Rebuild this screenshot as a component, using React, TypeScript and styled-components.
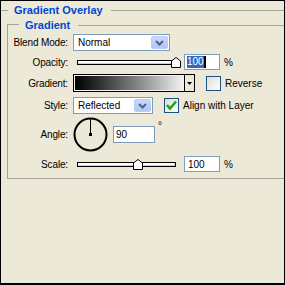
import styled, { createGlobalStyle } from 'styled-components';

const GlobalStyle = createGlobalStyle`
  html, body {
    margin: 0;
    padding: 0;
    background: #ece9d8;
  }
`;

const Panel = styled.div`
  width: 285px;
  height: 285px;
  box-sizing: border-box;
  border: 1px solid #000;
  border-bottom-width: 2px;
  background: #ece9d8;
  font-family: "Liberation Sans", Arial, sans-serif;
  color: #000;
  overflow: hidden;
`;

// 섹션 머리줄 (선 - 제목 - 선)
const HeadRow = styled.div<{ $mt: number }>`
  display: flex;
  align-items: center;
  height: 12px;
  margin-top: ${(p) => p.$mt}px;
`;
const Rule = styled.div<{ $w?: number }>`
  height: 0;
  border-top: 1px solid #a7a496;
  ${(p) => (p.$w ? `width: ${p.$w}px;` : 'flex: 1;')}
`;
const Corner = styled.div`
  width: 11px;
  height: 6px;
  align-self: flex-end;
  border-top: 1px solid #a7a496;
  border-left: 1px solid #a7a496;
`;
const Heading = styled.span<{ $ml: number }>`
  font-weight: bold;
  font-size: 11px;
  color: #0046d5;
  margin: 0 8px 0 ${(p) => p.$ml}px;
  white-space: nowrap;
`;

const Group = styled.div`
  margin-left: 6px;
  margin-top: 3px;
`;
const Body = styled.div`
  border-left: 1px solid #a7a496;
  border-bottom: 1px solid #a7a496;
  padding: 3px 0 6px;
`;

const Row = styled.div<{ $h: number; $mt?: number }>`
  display: grid;
  grid-template-columns: 60px auto;
  column-gap: 5px;
  align-items: center;
  height: ${(p) => p.$h}px;
  margin-top: ${(p) => p.$mt ?? 0}px;
`;
const Label = styled.span`
  font-size: 10px;
  letter-spacing: -0.15px;
  text-align: right;
  white-space: nowrap;
`;
const Controls = styled.div<{ $gap: number }>`
  display: flex;
  align-items: center;
  gap: ${(p) => p.$gap}px;
  height: 100%;
`;

// 콤보 박스
const Select = styled.div<{ $w: number }>`
  width: ${(p) => p.$w}px;
  height: 17px;
  box-sizing: border-box;
  border: 1px solid #7f9db9;
  background: #fff;
  display: flex;
  align-items: center;
  padding: 1px;
  font-size: 10px;
`;
const SelectText = styled.span`
  flex: 1;
  padding-left: 3px;
`;
const DropButton = styled.div`
  width: 17px;
  height: 13px;
  box-sizing: border-box;
  border: 1px solid #bacdf6;
  border-radius: 2px;
  background: linear-gradient(#c9d8fc, #b2c6f5);
  display: flex;
  align-items: center;
  justify-content: center;
`;

// 슬라이더
const SliderBox = styled.div`
  position: relative;
  width: 111px;
  height: 16px;
  display: flex;
  align-items: center;
`;
const Track = styled.div`
  margin-left: 4px;
  width: 99px;
  height: 5px;
  box-sizing: border-box;
  border: 1px solid #000;
  background: #fff;
  box-shadow: inset -1px -1px 0 #d4d0c8;
`;
const Thumb = styled.svg`
  position: absolute;
  top: 3px;
`;

const Field = styled.div<{ $w: number; $h: number }>`
  width: ${(p) => p.$w}px;
  height: ${(p) => p.$h}px;
  box-sizing: border-box;
  border: 1px solid #7f9db9;
  background: #fff;
  font-size: 10px;
  display: flex;
  align-items: center;
  padding-left: 2px;
`;
const Selected = styled.span`
  background: #316ac5;
  color: #fff;
  line-height: 12px;
  border-right: 2px solid #000;
`;
const Unit = styled.span<{ $raise?: boolean }>`
  font-size: 10px;
  align-self: ${(p) => (p.$raise ? 'flex-start' : 'center')};
  margin-top: ${(p) => (p.$raise ? '3px' : '0')};
`;

// 그라디언트 견본
const Swatch = styled.div`
  width: 122px;
  height: 18px;
  box-sizing: border-box;
  border: 1px solid #000;
  display: flex;
`;
const Ramp = styled.div`
  flex: 1;
  border: 1px solid #f4f3ee;
  background: linear-gradient(to right, #000 0%, #2a2a2a 20%, #8a8a8a 60%, #f2f2f2 100%);
`;
const RampArrow = styled.div`
  width: 9px;
  border-left: 1px solid #000;
  background: #ece9d8;
  display: flex;
  align-items: center;
  justify-content: center;
`;

const CheckWrap = styled.div<{ $ml: number }>`
  display: flex;
  align-items: center;
  gap: 4px;
  margin-left: ${(p) => p.$ml}px;
  font-size: 10px;
  white-space: nowrap;
`;
const Box = styled.div`
  width: 15px;
  height: 15px;
  box-sizing: border-box;
  border: 1px solid #1c5180;
  background: linear-gradient(135deg, #dcdcd5, #fff);
  display: flex;
  align-items: center;
  justify-content: center;
`;

const Chevron = () => (
  <svg width="9" height="6" viewBox="0 0 9 6">
    <polyline points="1,1 4.5,4.5 8,1" fill="none" stroke="#4d6185" strokeWidth="2" />
  </svg>
);

function Slider({ frac }: { frac: number }) {
  return (
    <SliderBox>
      <Track />
      <Thumb width="10" height="11" viewBox="0 0 10 11" style={{ left: 4 + frac * 99 - 5 }}>
        <polygon points="0.5,4 5,0.5 9.5,4 9.5,10.5 0.5,10.5" fill="#fff" stroke="#000" strokeWidth="1" />
      </Thumb>
    </SliderBox>
  );
}

function Check({ checked, text, ml }: { checked: boolean; text: string; ml: number }) {
  return (
    <CheckWrap $ml={ml}>
      <Box>
        {checked && (
          <svg width="13" height="13" viewBox="0 0 13 13">
            <polyline points="2,6 5,9.5 11,2.5" fill="none" stroke="#21a121" strokeWidth="2.5" />
          </svg>
        )}
      </Box>
      {text}
    </CheckWrap>
  );
}

export default function App() {
  return (
    <>
      <GlobalStyle />
      <Panel>
        <HeadRow $mt={3}>
          <Rule $w={7} />
          <Heading $ml={6}>Gradient Overlay</Heading>
          <Rule />
        </HeadRow>
        <Group>
          <HeadRow $mt={0}>
            <Corner />
            <Heading $ml={6}>Gradient</Heading>
            <Rule />
          </HeadRow>
          <Body>
            <Row $h={17}>
              <Label>Blend Mode:</Label>
              <Controls $gap={0}>
                <Select $w={97}>
                  <SelectText>Normal</SelectText>
                  <DropButton>
                    <Chevron />
                  </DropButton>
                </Select>
              </Controls>
            </Row>
            <Row $h={16} $mt={3}>
              <Label>Opacity:</Label>
              <Controls $gap={0}>
                <Slider frac={1} />
                <Field $w={36} $h={16}>
                  <Selected>100</Selected>
                </Field>
                <Unit style={{ marginLeft: 4 }}>%</Unit>
              </Controls>
            </Row>
            <Row $h={18} $mt={4}>
              <Label>Gradient:</Label>
              <Controls $gap={0}>
                <Swatch>
                  <Ramp />
                  <RampArrow>
                    <svg width="5" height="3" viewBox="0 0 5 3">
                      <polygon points="0,0 5,0 2.5,3" fill="#000" />
                    </svg>
                  </RampArrow>
                </Swatch>
                <Check checked={false} text="Reverse" ml={11} />
              </Controls>
            </Row>
            <Row $h={16} $mt={5}>
              <Label>Style:</Label>
              <Controls $gap={0}>
                <Select $w={80}>
                  <SelectText>Reflected</SelectText>
                  <DropButton>
                    <Chevron />
                  </DropButton>
                </Select>
                <Check checked text="Align with Layer" ml={11} />
              </Controls>
            </Row>
            <Row $h={34} $mt={4}>
              <Label>Angle:</Label>
              <Controls $gap={5}>
                <svg width="35" height="35" viewBox="0 0 35 35">
                  <circle cx="17.5" cy="17.5" r="16" fill="none" stroke="#000" strokeWidth="2" />
                  <line x1="17.5" y1="17.5" x2="17.5" y2="2" stroke="#000" strokeWidth="1" />
                  <rect x="16" y="16" width="3" height="3" fill="#000" />
                </svg>
                <Field $w={42} $h={17}>90</Field>
                <Unit $raise style={{ marginLeft: -2 }}>°</Unit>
              </Controls>
            </Row>
            <Row $h={16} $mt={5}>
              <Label>Scale:</Label>
              <Controls $gap={0}>
                <Slider frac={0.615} />
                <Field $w={36} $h={16} style={{ paddingLeft: 3 }}>100</Field>
                <Unit style={{ marginLeft: 4 }}>%</Unit>
              </Controls>
            </Row>
          </Body>
        </Group>
      </Panel>
    </>
  );
}
